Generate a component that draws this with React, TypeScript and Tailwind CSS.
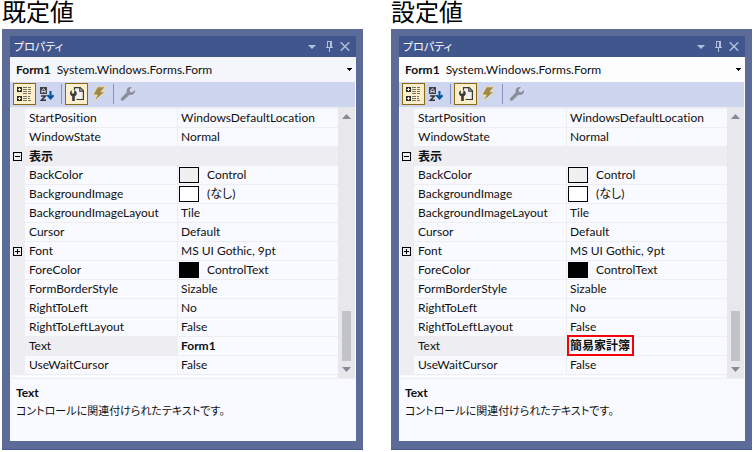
import type { ReactNode } from 'react';

type Row = {
  name: string;
  value?: string;
  swatch?: string;
  expand?: 'open' | 'closed';
  category?: boolean;
  selected?: boolean;
};

const baseRows: Row[] = [
  { name: 'StartPosition', value: 'WindowsDefaultLocation' },
  { name: 'WindowState', value: 'Normal' },
  { name: '表示', category: true, expand: 'open' },
  { name: 'BackColor', value: 'Control', swatch: 'bg-[#f0f0f0]' },
  { name: 'BackgroundImage', value: '(なし)', swatch: 'bg-white' },
  { name: 'BackgroundImageLayout', value: 'Tile' },
  { name: 'Cursor', value: 'Default' },
  { name: 'Font', value: 'MS UI Gothic, 9pt', expand: 'closed' },
  { name: 'ForeColor', value: 'ControlText', swatch: 'bg-black' },
  { name: 'FormBorderStyle', value: 'Sizable' },
  { name: 'RightToLeft', value: 'No' },
  { name: 'RightToLeftLayout', value: 'False' },
  { name: 'Text', selected: true },
  { name: 'UseWaitCursor', value: 'False' },
];

function Expander({ state, label }: { state: 'open' | 'closed'; label: string }) {
  return (
    <button type="button" aria-label={label} aria-expanded={state === 'open'} className="ml-0.5 block size-[9px]">
      <svg width="9" height="9" viewBox="0 0 9 9" shapeRendering="crispEdges" fill="none" stroke="#000">
        <path d="M.5 .5h8v8h-8zM2 4.5h5" />
        {state === 'closed' && <path d="M4.5 2v5" />}
      </svg>
    </button>
  );
}

function ToolButton({ label, active, children }: { label: string; active?: boolean; children: ReactNode }) {
  return (
    <button
      type="button"
      aria-label={label}
      aria-pressed={!!active}
      className={
        'flex h-[22px] items-center justify-center border ' +
        (active ? 'w-[23px] border-[#8b6914] bg-[#fdefcb]' : 'w-[21px] border-transparent')
      }
    >
      {children}
    </button>
  );
}

function CategorizedIcon() {
  return (
    <svg width="15" height="16" viewBox="0 0 15 16" shapeRendering="crispEdges">
      <path fill="#2d2d30" d="M0 1h5v5H0zM0 10h5v5H0z" />
      <path fill="#fdefcb" d="M1 3h3v1H1zM2 2h1v3H2zM1 12h3v1H1zM2 11h1v3H2z" />
      <path fill="#77705f" d="M6 1h4v1H6zM11 1h3v1h-3zM6 3h4v1H6zM11 3h3v1h-3zM6 5h4v1H6zM11 5h3v1h-3zM6 7h4v1H6zM11 7h3v1h-3zM6 10h4v1H6zM11 10h2v1h-2zM6 12h4v1H6zM11 12h2v1h-2zM6 14h4v1H6zM11 14h3v1h-3z" />
    </svg>
  );
}

function SortIcon() {
  return (
    <svg width="15" height="16" viewBox="0 0 15 16" className="shrink-0">
      <path fill="#424245" d="M1 1h7v7H1z" />
      <path fill="none" stroke="#d5dcf2" d="M2.900 7V4.500l1.600-2 1.600 2V7M3 5.500h3" />
      <path fill="none" stroke="#333337" strokeWidth="1.500" d="M2 10h4.500L2.400 14.200H7" />
      <path fill="none" stroke="#00539c" strokeWidth="2" d="M11.500 5v7M8.500 9.200l3 3.300 3-3.300" />
    </svg>
  );
}

function PropertiesIcon() {
  return (
    <svg width="16" height="16" viewBox="0 0 16 16">
      <path fill="#f3f1ee" stroke="#39393c" strokeWidth="1.200" d="M5.500 4V1.600h5.700l3.200 3.200v8.700H7.500" />
      <path fill="none" stroke="#39393c" strokeWidth="1.200" d="M10.800 1.600v3.600h3.600" />
      <path fill="#39393c" d="M2.800 4.200v3.200h2.400V4.200c1.700.5 2.600 1.700 2.600 3.200 0 1.200-.8 2.200-2 2.800V15H3.200v-4.800C1.800 9.600 1 8.600 1 7.400c0-1.400.6-2.600 1.800-3.200z" />
    </svg>
  );
}

function EventsIcon() {
  return (
    <svg width="16" height="16" viewBox="0 0 16 16" className="shrink-0">
      <path fill="#a08a45" stroke="#f3e3ae" strokeWidth=".9" d="M6.500.8h7.700L10 5.700h4L3.200 15.300 6.200 9H1.800z" />
    </svg>
  );
}

function WrenchIcon() {
  return (
    <svg width="16" height="16" viewBox="0 0 16 16" className="shrink-0">
      <path fill="#8b8e99" d="M14.900 3.900 12.500 6.200 10 6 9.700 3.500 12 1.100C10.500.7 8.900 1 7.800 2.100 6.700 3.200 6.400 4.800 6.900 6.300L1.300 11.900c-.7.7-.7 1.700 0 2.400.7.700 1.700.7 2.400 0l5.700-5.500c1.500.5 3.200.1 4.400-1 1.100-1.100 1.500-2.600 1.100-3.900z" />
    </svg>
  );
}

function PropertyPanel({ id, textValue, highlight }: { id: string; textValue: string; highlight?: boolean }) {
  return (
    <section aria-label="プロパティ" className="border-b border-[#465a90] bg-[#5d6b99] pt-[7px] pr-[7px] pb-2 pl-2">
      <div className="bg-[#f9faff]">
        <header className="flex h-[21px] items-center bg-[#40568d] pr-[5px] pl-1 text-white">
          <h2 className="flex-1 text-[11px] leading-5">プロパティ</h2>
          <div className="flex items-center gap-1 text-[#b2bfdf]">
            <button type="button" aria-label="ウィンドウの位置" className="mr-px flex size-3 items-center justify-center">
              <svg width="8" height="4" viewBox="0 0 8 4" fill="currentColor"><path d="M0 0h8L4 4z" /></svg>
            </button>
            <button type="button" aria-label="自動的に隠す" className="flex size-3 items-center justify-center">
              <svg width="7" height="11" viewBox="0 0 7 11" fill="none" stroke="currentColor" shapeRendering="crispEdges">
                <path d="M1.500 6V.5h4V6M4.500 1v5M0 6.500h7M3.500 7v4" />
              </svg>
            </button>
            <button type="button" aria-label="閉じる" className="flex size-3 items-center justify-center">
              <svg width="10" height="9" viewBox="0 0 10 9" fill="none" stroke="currentColor" strokeWidth="1.500">
                <path d="m.7.3 8.600 8.400M9.300.3.700 8.700" />
              </svg>
            </button>
          </div>
        </header>

        <div className={'relative flex h-[25px] items-center pl-1.5 ' + (highlight ? 'bg-[#fdfdfe]' : 'bg-[#f4f6fc]')}>
          <label htmlFor={id + '-object'} className="mr-1.5 font-bold">Form1</label>
          <select id={id + '-object'} className="h-5 min-w-0 flex-1 appearance-none bg-transparent outline-none">
            <option>System.Windows.Forms.Form</option>
          </select>
          <svg width="5" height="3" viewBox="0 0 5 3" className="pointer-events-none absolute right-1" shapeRendering="crispEdges">
            <path d="M0 0h5v1H0zM1 1h3v1H1zM2 2h1v1H2z" />
          </svg>
        </div>

        <div role="toolbar" className="mr-px flex h-[25px] items-center bg-[#cdd5ef] pb-px pl-[3px]">
          <ToolButton label="項目別" active><CategorizedIcon /></ToolButton>
          <ToolButton label="アルファベット順"><SortIcon /></ToolButton>
          <span className="mr-[3px] ml-1 h-5 w-px bg-[#8594c3]" />
          <ToolButton label="プロパティ" active><PropertiesIcon /></ToolButton>
          <ToolButton label="イベント"><EventsIcon /></ToolButton>
          <span className="mr-[3px] ml-1 h-5 w-px bg-[#8594c3]" />
          <ToolButton label="プロパティ ページ"><WrenchIcon /></ToolButton>
        </div>

        <div className="mr-px ml-px flex border-b border-[#eeeef2]">
          <div className="min-w-0 flex-1 border-t-2 border-[#eeeef2] pb-[3px]">
            <table className="w-full table-fixed border-separate border-spacing-0">
              <colgroup>
                <col className="w-[14px]" />
                <col className="w-[153px]" />
                <col />
              </colgroup>
              <tbody>
                {baseRows.map((row) => (
                  <tr key={row.name} className="h-[19px]">
                    <td className="bg-[#eeeef2] p-0">
                      {row.expand && <Expander state={row.expand} label={row.name} />}
                    </td>
                    {row.category ? (
                      <th colSpan={2} scope="rowgroup" className="bg-[#eeeef2] p-0 pl-1 text-left font-bold leading-[18px]">
                        {row.name}
                      </th>
                    ) : (
                      <>
                        <th
                          scope="row"
                          className={
                            'border-r border-b border-[#eeeef2] p-0 pl-1 text-left font-normal leading-[18px] ' +
                            (row.selected ? 'bg-[#eeeef2]' : '')
                          }
                        >
                          {row.name}
                        </th>
                        <td className="border-b border-[#eeeef2] p-0 leading-[18px]">
                          {row.selected ? (
                            <div className="relative flex h-[18px] items-center pl-[3px]">
                              <input
                                aria-label="Text"
                                defaultValue={textValue}
                                className="h-[18px] w-full bg-transparent font-bold outline-none"
                              />
                              {highlight && (
                                <span className="pointer-events-none absolute -top-0.5 left-0 h-[21px] w-[67px] border-2 border-[#f80008]" />
                              )}
                            </div>
                          ) : (
                            <div className="flex h-[18px] items-center">
                              {row.swatch ? (
                                <>
                                  <span className={'ml-px h-4 w-5 border border-black ' + row.swatch} />
                                  <span className="ml-2">{row.value}</span>
                                </>
                              ) : (
                                <span className="pl-[3px]">{row.value}</span>
                              )}
                            </div>
                          )}
                        </td>
                      </>
                    )}
                  </tr>
                ))}
              </tbody>
            </table>
          </div>
          <div className="flex w-[17px] flex-col items-center bg-[#e8e8ec] pt-[7px] pb-[6px]">
            <svg width="9" height="5" viewBox="0 0 9 5" fill="#868999"><path d="M0 5h9L4.500 0z" /></svg>
            <div className="mt-auto mb-[6px] h-[50px] w-[9px] bg-[#c2c3c9]" />
            <svg width="9" height="5" viewBox="0 0 9 5" fill="#868999"><path d="M0 0h9L4.500 5z" /></svg>
          </div>
        </div>

        <div className="h-[62px] px-1.5 pt-[5px] leading-[18px]">
          <h3 className="font-bold">Text</h3>
          <p className="text-[11px]">コントロールに関連付けられたテキストです。</p>
        </div>
      </div>
    </section>
  );
}

export default function App() {
  return (
    <main className="grid grid-cols-2 gap-7 bg-white px-0.5 font-['Lato','Noto_Sans_CJK_JP',sans-serif] text-[12px] text-[#101010] [font-feature-settings:'palt','liga'_0]">
      <div>
        <h1 className="h-[29px] text-[24px] leading-6 text-black">既定値</h1>
        <PropertyPanel id="default" textValue="Form1" />
      </div>
      <div>
        <h1 className="h-[29px] text-[24px] leading-6 text-black">設定値</h1>
        <PropertyPanel id="custom" textValue="簡易家計簿" highlight />
      </div>
    </main>
  );
}
